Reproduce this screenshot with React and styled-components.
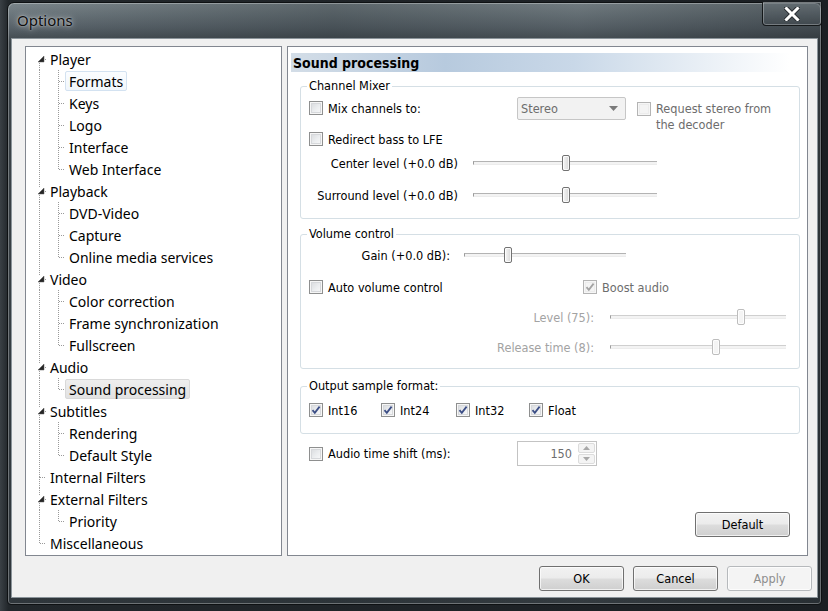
import React from 'react';
import styled, { createGlobalStyle } from 'styled-components';

const GlobalStyle = createGlobalStyle`
  html, body { margin: 0; padding: 0; overflow: hidden; background: #1d2125; }
  * { box-sizing: border-box; }
`;

const UI_FONT = `"DejaVu Sans Condensed", "DejaVu Sans", sans-serif`;
const TREE_FONT = `"Noto Sans", "Open Sans", sans-serif`;

const Desktop = styled.div`
  width: 828px;
  height: 611px;
  padding: 2px 6px 0 7px;
  background: linear-gradient(90deg, #3a4045 0%, #22272b 1%, #1b1f23 100%);
`;

const Window = styled.div`
  width: 815px;
  border: 1px solid #0e1113;
  border-radius: 7px 7px 4px 4px;
  box-shadow: inset 0 0 0 1px rgba(255, 255, 255, 0.3);
  background:
    linear-gradient(90deg, rgba(70, 80, 86, 0.0) 0%, rgba(40, 48, 52, 0.35) 40%, rgba(70, 78, 82, 0.2) 70%, rgba(30, 36, 40, 0.4) 100%),
    linear-gradient(180deg, #7b868b 0px, #59636a 24px, #3d454a 40px, #2f363b 100%);
  padding: 0 3px 6px 3px;
  display: flex;
  flex-direction: column;
`;

const TitleBar = styled.div`
  height: 35px;
  display: flex;
  align-items: flex-start;
  justify-content: space-between;
`;

const Title = styled.div`
  padding: 7px 0 0 6px;
  font-family: ${TREE_FONT};
  font-size: 15px;
  color: #0c0c0c;
  text-shadow: 0 0 6px rgba(255, 255, 255, 0.75), 0 0 2px rgba(255, 255, 255, 0.6);
`;

const CloseButton = styled.div`
  width: 60px;
  height: 24px;
  margin: -1px -4px 0 0;
  border: 1px solid rgba(10, 12, 14, 0.85);
  border-top: none;
  border-radius: 0 0 4px 4px;
  box-shadow: inset 0 0 0 1px rgba(255, 255, 255, 0.28);
  background: linear-gradient(180deg, rgba(110, 120, 126, 0.55) 0%, rgba(60, 68, 74, 0.55) 100%);
  display: flex;
  align-items: center;
  justify-content: center;
`;

const Client = styled.div`
  height: 560px;
  background: #f0f0f0;
  border: 1px solid #8b949a;
  padding: 7px 5px 6px 13px;
  display: flex;
  flex-direction: column;
`;

const Main = styled.div`
  height: 510px;
  display: flex;
  gap: 5px;
  margin-right: 4px;
`;

/* ---------- tree ---------- */

const Tree = styled.div`
  width: 257px;
  flex: none;
  border: 1px solid #828790;
  background: #fff;
  padding-top: 1px;
  font-family: ${TREE_FONT};
  font-size: 14px;
  color: #000;
`;

const TreeRow = styled.div`
  height: 22px;
  display: flex;
  align-items: center;
`;

const Gutter = styled.svg`
  flex: none;
  display: block;
`;

const TreeLabel = styled.span`
  height: 20px;
  display: flex;
  align-items: center;
  padding: 0 3px;
  border: 1px solid transparent;
  border-radius: 2px;
  white-space: nowrap;
  ${(p) =>
    p.$state === 'hot' &&
    `border-color: #d3e2f1; background: linear-gradient(180deg, #fbfdff, #f1f6fb);`}
  ${(p) =>
    p.$state === 'selected' &&
    `border-color: #d9d9d9; background: linear-gradient(180deg, #eeeeee, #e2e2e2);`}
`;

const LINE = { stroke: '#9a9a9a', strokeWidth: 1, strokeDasharray: '1 1', shapeRendering: 'crispEdges' };

function RootGutter({ first, last, expander, child }) {
  return (
    <Gutter width="20" height="22">
      {child ? (
        <line x1="13.5" y1="0" x2="13.5" y2="22" style={LINE} />
      ) : (
        <>
          {!first && <line x1="13.5" y1="0" x2="13.5" y2={expander ? 7 : 11} style={LINE} />}
          {!last && <line x1="13.5" y1={expander ? 15 : 11} x2="13.5" y2="22" style={LINE} />}
          {expander ? (
            <>
              <polygon points="12,14 18,8 18,14" fill="#262626" stroke="#5a5a5a" strokeWidth="0.5" />
              <line x1="19" y1="11.5" x2="20" y2="11.5" style={LINE} />
            </>
          ) : (
            <line x1="14" y1="11.5" x2="20" y2="11.5" style={LINE} />
          )}
        </>
      )}
    </Gutter>
  );
}

function ChildGutter({ last }) {
  return (
    <Gutter width="19" height="22">
      <line x1="12.5" y1="0" x2="12.5" y2={last ? 11 : 22} style={LINE} />
      <line x1="13" y1="11.5" x2="19" y2="11.5" style={LINE} />
    </Gutter>
  );
}

const treeData = [
  { label: 'Player', children: ['Formats', 'Keys', 'Logo', 'Interface', 'Web Interface'] },
  { label: 'Playback', children: ['DVD-Video', 'Capture', 'Online media services'] },
  { label: 'Video', children: ['Color correction', 'Frame synchronization', 'Fullscreen'] },
  { label: 'Audio', children: ['Sound processing'] },
  { label: 'Subtitles', children: ['Rendering', 'Default Style'] },
  { label: 'Internal Filters', children: [] },
  { label: 'External Filters', children: ['Priority'] },
  { label: 'Miscellaneous', children: [] },
];

const itemState = { Formats: 'hot', 'Sound processing': 'selected' };

function OptionsTree() {
  return (
    <Tree>
      {treeData.map((node, i) => (
        <React.Fragment key={node.label}>
          <TreeRow>
            <RootGutter
              first={i === 0}
              last={i === treeData.length - 1}
              expander={node.children.length > 0}
            />
            <TreeLabel>{node.label}</TreeLabel>
          </TreeRow>
          {node.children.map((c, j) => (
            <TreeRow key={c}>
              <RootGutter child />
              <ChildGutter last={j === node.children.length - 1} />
              <TreeLabel $state={itemState[c]}>{c}</TreeLabel>
            </TreeRow>
          ))}
        </React.Fragment>
      ))}
    </Tree>
  );
}

/* ---------- page panel ---------- */

const Panel = styled.div`
  flex: 1;
  border: 1px solid #828790;
  background: #fff;
  display: flex;
  flex-direction: column;
  font-family: ${UI_FONT};
  font-stretch: condensed;
  font-size: 12.6px;
  color: #000;
`;

const PageHeader = styled.div`
  margin: 6px 2px 0 3px;
  height: 19px;
  padding: 0 2px;
  display: flex;
  align-items: center;
  font-weight: bold;
  font-size: 14px;
  background: linear-gradient(90deg, #d3dde7 0%, #b7cade 30%, #c9d8e8 55%, #ffffff 97%);
`;

const Group = styled.fieldset`
  margin: ${(p) => p.$mt}px 7px 0 12px;
  min-width: 0;
  border: 1px solid #d5dfe5;
  border-radius: 3px;
  padding: 0 0 ${(p) => p.$pb}px 8px;
`;

const Legend = styled.legend`
  height: 16px;
  line-height: 16px;
  padding: 0 2px;
  margin-left: -2px;
  color: #000;
`;

const Row = styled.div`
  display: flex;
  align-items: center;
  height: ${(p) => p.$h || 16}px;
  margin-top: ${(p) => p.$mt || 0}px;
  margin-left: ${(p) => p.$ml || 0}px;
`;

const CheckItem = styled.label`
  display: flex;
  align-items: center;
  gap: 5px;
  width: ${(p) => (p.$w ? `${p.$w}px` : 'auto')};
  flex: none;
  white-space: nowrap;
  color: ${(p) => (p.$disabled ? '#6d6d6d' : '#000')};
`;

const Box = styled.span`
  width: 14px;
  height: 14px;
  flex: none;
  border: 1px solid ${(p) => (p.$disabled ? '#b4b4b4' : '#8e8f8f')};
  background: ${(p) =>
    p.$disabled
      ? '#f4f4f4'
      : 'linear-gradient(135deg, #d5d7da 0%, #eceef0 55%, #fbfbfb 100%)'};
  box-shadow: inset 0 0 0 1px #f6f6f6, inset 0 0 0 2px ${(p) => (p.$disabled ? '#ececec' : '#d6d8db')};
  display: flex;
  align-items: center;
  justify-content: center;
`;

function Check({ checked, disabled, label, w, children }) {
  return (
    <CheckItem $w={w} $disabled={disabled}>
      <Box $disabled={disabled}>
        {checked && (
          <svg width="10" height="10" viewBox="0 0 10 10">
            <path
              d="M1.5 5.2 L3.8 7.8 L8.6 1.6"
              fill="none"
              stroke={disabled ? '#a3a3a3' : '#3c4e86'}
              strokeWidth="1.8"
            />
          </svg>
        )}
      </Box>
      {label}
      {children}
    </CheckItem>
  );
}

const FieldLabel = styled.span`
  width: ${(p) => p.$w}px;
  flex: none;
  text-align: right;
  white-space: nowrap;
  color: ${(p) => (p.$disabled ? '#a3a3a3' : '#000')};
`;

const Track = styled.div`
  position: relative;
  width: ${(p) => p.$w}px;
  margin-left: ${(p) => p.$ml}px;
  height: 4px;
  flex: none;
  border-top: 1px solid ${(p) => (p.$disabled ? '#cfcfcf' : '#b3b3b3')};
  border-left: 1px solid #9c9c9c;
  border-bottom: 1px solid #ececec;
  background: #f3f3f3;
`;

const Thumb = styled.span`
  position: absolute;
  top: -7px;
  width: 8px;
  height: 16px;
  margin-left: -4px;
  border: 1px solid ${(p) => (p.$disabled ? '#bdbdbd' : '#727272')};
  border-radius: 2px;
  background: ${(p) =>
    p.$disabled ? '#f4f4f4' : 'linear-gradient(90deg, #f6f6f6 0%, #e4e4e4 60%, #d6d6d6 100%)'};
  box-shadow: inset 0 0 0 1px rgba(255, 255, 255, 0.8);
`;

function Slider({ w, ml, value, disabled }) {
  return (
    <Track $w={w} $ml={ml} $disabled={disabled}>
      <Thumb $disabled={disabled} style={{ left: `${value * 100}%` }} />
    </Track>
  );
}

const Combo = styled.div`
  width: 109px;
  height: 23px;
  flex: none;
  border: 1px solid #c6c6c6;
  border-radius: 2px;
  background: #f2f2f2;
  color: #6d6d6d;
  display: flex;
  align-items: center;
  justify-content: space-between;
  padding: 0 7px 0 3px;
`;

const RequestItem = styled.div`
  align-self: flex-start;
  margin: 5px 0 0 11px;
  display: flex;
  align-items: flex-start;
  gap: 5px;
  color: #6d6d6d;
  line-height: 16px;
  span:first-child { margin-top: 1px; }
`;

const Spin = styled.div`
  width: 80px;
  height: 25px;
  flex: none;
  border: 1px solid #c3c3c3;
  background: #fff;
  display: flex;
`;

const SpinValue = styled.div`
  flex: 1;
  text-align: right;
  padding-right: 5px;
  line-height: 23px;
  color: #6d6d6d;
`;

const SpinButtons = styled.div`
  width: 19px;
  display: flex;
  flex-direction: column;
  gap: 1px;
  padding: 1px;
`;

const SpinButton = styled.div`
  flex: 1;
  border: 1px solid #dcdcdc;
  border-radius: 2px;
  background: #f4f4f4;
  display: flex;
  align-items: center;
  justify-content: center;
`;

const Button = styled.div`
  width: ${(p) => p.$w}px;
  height: 25px;
  flex: none;
  border: 1px solid ${(p) => (p.$disabled ? '#b6b9bc' : '#707070')};
  border-radius: 3px;
  background: ${(p) =>
    p.$disabled
      ? '#f4f4f4'
      : 'linear-gradient(180deg, #f2f2f2 0%, #ebebeb 49%, #dddddd 51%, #cfcfcf 100%)'};
  box-shadow: inset 0 0 0 1px rgba(255, 255, 255, 0.7);
  color: ${(p) => (p.$disabled ? '#8d8d8d' : '#000')};
  font-family: ${UI_FONT};
  font-stretch: condensed;
  font-size: 12.6px;
  display: flex;
  align-items: center;
  justify-content: center;
`;

const DefaultButton = styled(Button)`
  margin: auto 17px 18px 0;
  align-self: flex-end;
`;

const Footer = styled.div`
  margin-top: 10px;
  display: flex;
  justify-content: flex-end;
  gap: 9px;
`;

function SoundPage() {
  return (
    <Panel>
      <PageHeader>Sound processing</PageHeader>

      <Group $mt={6} $pb={15}>
        <Legend>Channel Mixer</Legend>
        <Row $mt={2} $h={24}>
          <Check w={208} label="Mix channels to:" />
          <Combo>
            Stereo
            <svg width="9" height="5" viewBox="0 0 9 5">
              <polygon points="0,0 9,0 4.5,5" fill="#7a7a7a" />
            </svg>
          </Combo>
          <RequestItem>
            <Box $disabled />
            <span>
              Request stereo from
              <br />
              the decoder
            </span>
          </RequestItem>
        </Row>
        <Row $mt={11}>
          <Check label="Redirect bass to LFE" />
        </Row>
        <Row $mt={8}>
          <FieldLabel $w={149}>Center level (+0.0 dB)</FieldLabel>
          <Slider w={184} ml={15} value={0.505} />
        </Row>
        <Row $mt={16}>
          <FieldLabel $w={149}>Surround level (+0.0 dB)</FieldLabel>
          <Slider w={184} ml={15} value={0.505} />
        </Row>
      </Group>

      <Group $mt={7} $pb={13}>
        <Legend>Volume control</Legend>
        <Row $mt={5}>
          <FieldLabel $w={141}>Gain (+0.0 dB):</FieldLabel>
          <Slider w={162} ml={14} value={0.265} />
        </Row>
        <Row $mt={16}>
          <Check w={274} label="Auto volume control" />
          <Check checked disabled label="Boost audio" />
        </Row>
        <Row $mt={14}>
          <FieldLabel $w={285} $disabled>Level (75):</FieldLabel>
          <Slider w={176} ml={16} value={0.74} disabled />
        </Row>
        <Row $mt={14}>
          <FieldLabel $w={285} $disabled>Release time (8):</FieldLabel>
          <Slider w={176} ml={16} value={0.6} disabled />
        </Row>
      </Group>

      <Group $mt={9} $pb={15}>
        <Legend>Output sample format:</Legend>
        <Row $mt={8}>
          <Check w={72} checked label="Int16" />
          <Check w={75} checked label="Int24" />
          <Check w={73} checked label="Int32" />
          <Check checked label="Float" />
        </Row>
      </Group>

      <Row $mt={7} $h={25} $ml={21}>
        <Check w={208} label="Audio time shift (ms):" />
        <Spin>
          <SpinValue>150</SpinValue>
          <SpinButtons>
            <SpinButton>
              <svg width="7" height="4" viewBox="0 0 7 4">
                <polygon points="0,4 7,4 3.5,0" fill="#a8a8a8" />
              </svg>
            </SpinButton>
            <SpinButton>
              <svg width="7" height="4" viewBox="0 0 7 4">
                <polygon points="0,0 7,0 3.5,4" fill="#a8a8a8" />
              </svg>
            </SpinButton>
          </SpinButtons>
        </Spin>
      </Row>

      <DefaultButton $w={95}>Default</DefaultButton>
    </Panel>
  );
}

export default function App() {
  return (
    <>
      <GlobalStyle />
      <Desktop>
        <Window>
          <TitleBar>
            <Title>Options</Title>
            <CloseButton>
              <svg width="16" height="14" viewBox="0 0 16 14">
                <path
                  d="M2 1 L14 13 M14 1 L2 13"
                  stroke="#2a2f33"
                  strokeWidth="5"
                  strokeLinecap="square"
                />
                <path
                  d="M2.5 1.5 L13.5 12.5 M13.5 1.5 L2.5 12.5"
                  stroke="#ffffff"
                  strokeWidth="3"
                  strokeLinecap="square"
                />
              </svg>
            </CloseButton>
          </TitleBar>
          <Client>
            <Main>
              <OptionsTree />
              <SoundPage />
            </Main>
            <Footer>
              <Button $w={85}>OK</Button>
              <Button $w={85}>Cancel</Button>
              <Button $w={85} $disabled>
                Apply
              </Button>
            </Footer>
          </Client>
        </Window>
      </Desktop>
    </>
  );
}
